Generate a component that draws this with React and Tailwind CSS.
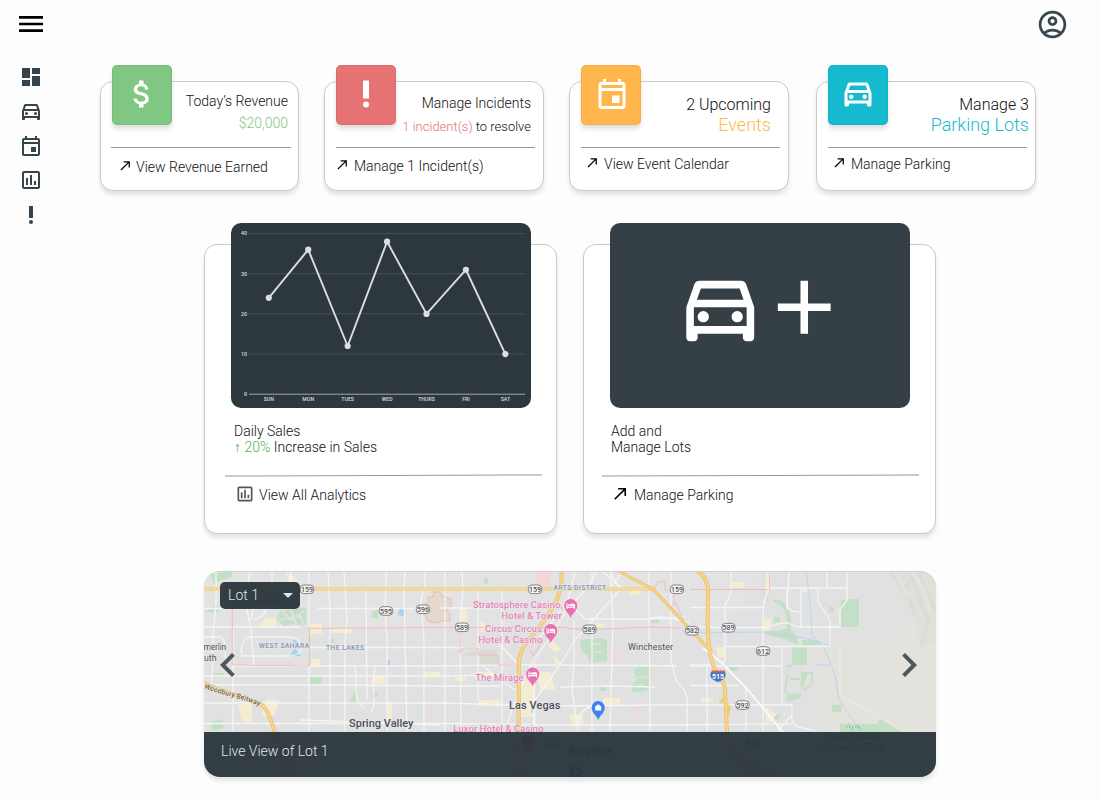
import React from "react";

const PATHS = {
  menu: "M3 18h18v-2H3v2zm0-5h18v-2H3v2zm0-7v2h18V6H3z",
  dashboard: "M3 13h8V3H3v10zm0 8h8v-6H3v6zm10 0h8V11h-8v10zm0-18v6h8V3h-8z",
  car: "M18.92 6.01C18.72 5.42 18.16 5 17.5 5h-11c-.66 0-1.21.42-1.42 1.01L3 12v8c0 .55.45 1 1 1h1c.55 0 1-.45 1-1v-1h12v1c0 .55.45 1 1 1h1c.55 0 1-.45 1-1v-8l-2.08-5.99zM6.85 7h10.29l1.04 3H5.81l1.04-3zM19 17H5v-5h14v5zM7.5 13a1.5 1.5 0 1 1 0 3a1.5 1.5 0 1 1 0-3zM16.5 13a1.5 1.5 0 1 1 0 3a1.5 1.5 0 1 1 0-3z",
  event: "M19 4h-1V2h-2v2H8V2H6v2H5c-1.11 0-1.99.9-1.99 2L3 20c0 1.1.89 2 2 2h14c1.1 0 2-.9 2-2V6c0-1.1-.9-2-2-2zm0 16H5V10h14v10zm0-12H5V6h14v2zm-7 5h5v5h-5z",
  chart: "M19 3H5c-1.1 0-2 .9-2 2v14c0 1.1.9 2 2 2h14c1.1 0 2-.9 2-2V5c0-1.1-.9-2-2-2zm0 16H5V5h14v14zM7 10h2v7H7zM11 7h2v10h-2zM15 13h2v4h-2z",
  alert: "M10 3h4v12h-4zM12 17a2 2 0 1 1 0 4a2 2 0 1 1 0-4z",
  money: "M11.8 10.9c-2.27-.59-3-1.2-3-2.15 0-1.09 1.01-1.85 2.7-1.85 1.78 0 2.44.85 2.5 2.1h2.21c-.07-1.72-1.12-3.3-3.21-3.81V3h-3v2.16c-1.94.42-3.5 1.68-3.5 3.61 0 2.31 1.91 3.46 4.7 4.13 2.5.6 3 1.48 3 2.41 0 .69-.49 1.79-2.7 1.79-2.06 0-2.87-.92-2.98-2.1h-2.2c.12 2.19 1.76 3.42 3.68 3.83V21h3v-2.15c1.95-.37 3.5-1.5 3.5-3.55 0-2.84-2.43-3.81-4.7-4.4z",
  arrow: "M9 5v2h6.59L4 18.59 5.41 20 17 8.41V15h2V5z",
  plus: "M19 13h-6v6h-2v-6H5v-2h6V5h2v6h6v2z",
  account: "M12 2C6.48 2 2 6.48 2 12s4.48 10 10 10 10-4.48 10-10S17.52 2 12 2zM7.35 18.5C8.66 17.56 10.26 17 12 17s3.34.56 4.65 1.5C15.34 19.44 13.74 20 12 20s-3.34-.56-4.65-1.5zm10.79-1.38C16.45 15.8 14.32 15 12 15s-4.45.8-6.14 2.12C4.7 15.73 4 13.95 4 12c0-4.42 3.58-8 8-8s8 3.58 8 8c0 1.95-.7 3.73-1.86 5.12zM12 6c-1.93 0-3.5 1.57-3.5 3.5S10.07 13 12 13s3.5-1.57 3.5-3.5S13.93 6 12 6zm0 5c-.83 0-1.5-.67-1.5-1.5S11.17 8 12 8s1.5.67 1.5 1.5S12.83 11 12 11z",
  left: "M15.41 7.41L14 6l-6 6 6 6 1.41-1.41L10.83 12z",
  right: "M10 6L8.59 7.41 13.17 12l-4.58 4.59L10 18l6-6z",
  caret: "M7 10l5 5 5-5z",
};

function Icon({ name, className }) {
  return (
    <svg viewBox="0 0 24 24" className={`block shrink-0 ${className}`} fill="currentColor" fillRule="evenodd">
      <path d={PATHS[name]} />
    </svg>
  );
}

const CARD = "border border-[#c9cacb] bg-white shadow-[0_4px_4px_rgba(0,0,0,0.1)]";

function StatCard({ className, tile, icon, iconClass, textClass, children, action, arrowClass, lineClass, actionClass }) {
  return (
    <div className={`h-[110px] rounded-[13px] ${CARD} ${className}`}>
      <div className="flex h-[65px]">
        <div className={`-mt-[17px] ml-[11px] h-[60px] w-[60px] shrink-0 rounded-[5px] border border-black/5 shadow-[0_4px_4px_rgba(0,0,0,0.12)] ${tile}`}>
          <Icon name={icon} className={`h-9 w-9 text-white ${iconClass}`} />
        </div>
        <div className={`ml-auto text-right whitespace-nowrap ${textClass}`}>{children}</div>
      </div>
      <div className={`h-px bg-[#979899] ${lineClass}`} />
      <div className={`flex ${actionClass}`}>
        <Icon name="arrow" className={`h-[15px] w-[15px] text-black ${arrowClass}`} />
        <span className="whitespace-nowrap text-[14px] leading-[18px]">{action}</span>
      </div>
    </div>
  );
}

const SALES = [
  ["SUN", 24], ["MON", 36], ["TUES", 12], ["WED", 38], ["THURS", 20], ["FRI", 31], ["SAT", 10],
];
const px = (i) => 37.8 + i * 39.43;
const py = (v) => 171 - v * 4.015;

function SalesChart() {
  return (
    <svg viewBox="0 0 300 185" className="block h-full w-full">
      {[0, 10, 20, 30, 40].map((v) => (
        <g key={v}>
          <line x1="18" x2="294" y1={py(v) + 0.2} y2={py(v) + 0.2} stroke={v ? "#465157" : "#a0a7aa"} strokeWidth="1" />
          <text x="16" y={py(v) + 2} textAnchor="end" fontSize="5.300" fontWeight="500" fill="#d8dadb">{v}</text>
        </g>
      ))}
      <polyline points={SALES.map(([, v], i) => `${px(i)},${py(v) + 0.2}`).join(" ")} fill="none" stroke="#dedede" strokeWidth="1.9" />
      {SALES.map(([d, v], i) => (
        <g key={d}>
          <circle cx={px(i)} cy={py(v) + 0.2} r="3.1" fill="#dedede" />
          <text x={px(i)} y="178" textAnchor="middle" fontSize="5.200" fontWeight="500" fill="#d8dadb">{d}</text>
        </g>
      ))}
    </svg>
  );
}

const MINOR_ROADS = [
  // east-west
  "M204 608.500H266M318 608.500H420", "M204 627H300", "M309 647.500H480", "M232 666H440L519 665L648 665.500L676 666",
  "M204 676H440L500 675", "M211 685H340L440 686H500", "M204 703H440L519 705L560 706L660 705L792 705",
  "M204 723.500H440L560 725H650L792 724", "M272 588V572M300 720L440 725", "M440 608H500M560 608H574L585 619H650L686 617",
  "M560 687L610 686L655 687", "M690 607.500H763", "M690 627H708L715 627.500H765C775 627 780 621 788 623L797 627H840",
  "M725 646.500H830V620L818 602V588", "M690 666H782", "M690 685.500H739", "M690 665H712", "M765 588H847",
  "M690 622L660 617L650 618",
  // north-south
  "M216 572V600C216 620 210 640 213 660L211 690", "M250 572L245 600L251 630L254 666",
  "M232 589L233 598M233 628V731", "M254 620C270 615 262 605 278 605L291 590V572", "M291 572L288 590",
  "M309 572V627M309 666V731", "M328 572L330 610L330 724", "M344 572L347 620L345 640V731", "M366 588L367 700",
  "M386 572L385 610L387 640V731", "M405 572L404 592L407 731", "M425 572V586L421 600L424 640V731",
  "M445 572V731", "M462 572L463 590L460 620L461 731", "M478 588V700", "M502 590V731",
  "M535 663L535 672L533 731", "M574 620V660L572 690L578 731", "M592 572V588M592 615V731", "M611 572V588L613 620L610 731",
  "M649 572V600L650 731", "M671 572V660L676 680C683 690 688 690 687 705V731", "M708 663C704 680 709 690 707 731",
  "M731 572V592L725 606V660L722 665", "M770 572L769 588C764 600 763 600 763 627V731", "M782 647V703",
  "M789 572L787 605C789 610 792 612 801 612", "M801 588V627", "M827 572V588", "M847 572V600L840 610V627",
  "M787 588V610", "M746 685V731", "M792 705V720C793 727 800 727 815 731",
  "M778 731L790 717H792",
  // curved loops and diagonals
  "M242 656C240 650 242 638 250 637H285C297 637 301 642 301 648C300 654 296 656 288 656H248Z",
  "M255 600L251 620", "M204 637H218C228 636 224 654 226 660", "M355 666C358 690 352 700 364 708", "M375 667C370 690 378 700 371 712",
  "M610 571L620 590L575 640L560 665L542 690L535 700V731", "M598 571L585 590L565 612L548 640L532 663L519 690L505 731",
  "M575 571L568 600L552 622L530 650", "M500 645L519 665", "M482 665L500 680L519 692", "M602 571L622 588M622 571L611 588",
  "M578 723C580 708 590 706 600 705",
];

const MAJOR_ROADS = ["M703 648L722 663L748 690L782 731L825 777"];

const PARKS = [
  "M280 611L306 607V626L294 624L284 626L276 620Z", "M210 574L232 571V577L222 580L214 584Z", "M310 677H322V685H310Z",
  "M349 702L357 686V704H349Z", "M211 722L222 719L224 728L212 731Z", "M372 612L378 609V618H371Z", "M214 673H224V677H214Z",
  "M580 640L598 638L607 640V661L590 663L587 655L581 650Z", "M633 670L640 667H649V690L640 692L632 692V684L637 680Z",
  "M841 600L847 599H859V627H841Z", "M764 631L775 631L790 628L798 638V645L785 639L765 634Z", "M773 599C790 599 793 618 790 632L787 631C788 618 785 604 773 602Z",
  "M792 647H807V665H792Z", "M801 665V698L787 702V695L800 693L804 685L808 673H802Z", "M785 668L792 667V665H788Z",
  "M802 640H818L820 645H802Z", "M832 705H842V712H832Z", "M840 724H877L880 719L900 731L925 745L936 752V777H850L840 745Z",
  "M729 667H738V671H729Z", "M774 617H780V622H774Z", "M829 607H834V612H829Z", "M484 578H488V584H484Z", "M651 618H659V623H651Z",
  "M600 686H606V691H600Z", "M330 639H334V643H330Z", "M372 692H378V697H372Z", "M749 690L755 694L751 695Z", "M773 718L780 714L778 720Z",
  "M325 747L375 748L384 762L340 760Z", "M204 612H219L217 604Z",
];

const COMMERCE = [
  "M265 618H276V628H260V624Z", "M286 572L296 578L300 584L288 582Z", "M310 624H322V634H310Z", "M332 628H352V633H332Z", "M311 659H320V666H311Z",
  "M372 676H385V684H372Z", "M238 704H252V722H242Z", "M266 700H279L274 716H262Z", "M425 672H440V677H425Z", "M388 702H392V720H388Z",
  "M460 608H467V622H460Z", "M521 680H535V717H521Z", "M537 672H550L555 690H540Z", "M475 672H493V680H475Z", "M478 700H500V706H478Z",
  "M552 640L562 650L556 652L548 646Z", "M553 655L563 664H555Z", "M570 714H583V726H572Z", "M630 590H640V595H630Z", "M731 582H744V588H731Z",
  "M764 619H771V630H763Z", "M767 571H770V588H765Z", "M716 647H725V658H718Z", "M701 698H713V702H701Z", "M766 706L776 714L772 722H766Z",
  "M603 698H620V706H603Z", "M455 677H467V681H455Z", "M480 620L492 627V632H480Z", "M596 623H604V628H596Z", "M803 588H807V592H803Z",
];

const SHIELDS = [
  [307, 589.300, "159"], [386, 611, "595"], [423, 609.300, "596"], [462, 627.300, "589"], [535, 589.300, "159"], [589.500, 629.300, "589"],
  [677, 589.300, "159"], [692, 630.700, "582"], [728.500, 627.700, "589"], [763, 651, "612"], [742.500, 705, "592"],
  [552, 742, "593"], [753, 744, "593"],
];

function Pin({ x, y, color, children }) {
  return (
    <g transform={`translate(${x} ${y})`}>
      <path d="M0 12C-1.200 8-6.600 4.800-6.600-.4A6.600 6.600 0 0 1 6.600-.4C6.600 4.800 1.200 8 0 12Z" fill={color} />
      {children}
    </g>
  );
}

function Bed() {
  return (
    <g>
      <path d="M-4.300-3H-3.300V.4H3.300V-.6H4.300V3H3.300V1.800H-3.300V3H-4.300Z" fill="#fff" />
      <path d="M-.6-2.300H3A1.300 1.300 0 0 1 4.300-1V0H-.6Z" fill="#fff" />
      <circle cx="-2" cy="-1" r="1" fill="#fff" />
    </g>
  );
}

function CityMap() {
  const halo = { paintOrder: "stroke", stroke: "#e6e6e6", strokeWidth: 1.6, strokeLinejoin: "round" };
  const places = [
    ["Stratosphere Casino,", 562.500, 607.500, 89.5], ["Hotel & Tower", 562, 618.500, 60.5], ["Circus Circus", 542, 632.300, 57],
    ["Hotel & Casino", 542.500, 643.300, 64], ["The Mirage", 523.500, 681.300, 48], ["Luxor Hotel & Casino", 543.500, 732.300, 90],
  ];
  return (
    <svg viewBox="204 571 732 206" className="block h-[206px] w-[732px]" fontWeight="400">
      <rect x="204" y="571" width="732" height="206" fill="#e1e1e1" />
      <path d="M204 571H765L725 627H204Z" fill="#e5e5e5" opacity="0.5" />
      <path d="M820 652L850 640L900 635L936 600V777H840L815 700Z" fill="#e3e2dd" />
      <path d="M888 571H936V640L920 648L916 620L905 600Z" fill="#e0dfda" />
      <path d="M890 571L905 590L912 575L920 600L928 620L922 645M905 585L915 615M918 572L930 600L936 610" stroke="#d6d5ce" strokeWidth="3" fill="none" opacity="0.5" />
      <path d="M912 571L925 592L931 612M897 577L910 598" stroke="#e8e6e0" strokeWidth="3" fill="none" opacity="0.7" />
      <path d="M840 647V695L895 726" stroke="#edece8" fill="none" />
      {PARKS.map((d) => <path key={d} d={d} fill="#c3e0c6" />)}
      {COMMERCE.map((d) => <path key={d} d={d} fill="#f4ecd3" />)}
      <path d="M461 656H480V664L497 665V650H478Z" fill="#dcd8d3" />
      <path d="M424 605L428 602V597H433L434 592H440L442 596L451 599V606L446 610L450 614V621H441L438 623L428 621L424 612Z" fill="#e3d9cf" stroke="#efaea8" strokeWidth="0.800" />
      <path d="M537 571H550V588H535ZM611 650H616V665H611ZM634 707H639V714H634ZM428 709H433V714H428Z" fill="#f2d7d6" />
      <path d="M399 609H404V617L398 615ZM387 660H390V665H387ZM292 638L300 641L296 650L301 656H289L295 648Z" fill="#a9d3f5" />
      <path d="M806 571L810 600L812 635L825 650L835 675L839 700L860 731M700 633L760 632L800 637L830 645M817 665H830M763 593L768 601" stroke="#b5d5ef" fill="none" strokeWidth="1" />
      <circle cx="533" cy="711" r="2" fill="#a9d3f5" />
      <path d="M282 611L291 620L304 611M278 620L300 616L305 626M290 607L297 626" stroke="#e1e1e1" strokeWidth="2" fill="none" />
      <path d="M583 645L594 641L603 645L593 650L604 654L592 659M638 690V675L645 671V687M790 679H800M803 673H812V683L804 691M788 675L785 690L790 698" stroke="#c3e0c6" strokeWidth="2" fill="none" />
      <path d="M590 644H601M594 652H602M637 677H647M639 685H646" stroke="#e1e1e1" strokeWidth="1.500" fill="none" />
      {MINOR_ROADS.map((d) => <path key={d} d={d} stroke="#f5f5f5" strokeWidth="1.300" fill="none" strokeLinejoin="round" />)}
      {MAJOR_ROADS.map((d) => <path key={d} d={d} stroke="#f9f9f9" strokeWidth="2" fill="none" />)}
      <path d="M232.300 598V665L309.500 666V628.500L440 627.500H563L574 629H604L650 627L680 628M690 589.500H769.500V571M655 589L657 582H665V590L674 592V604M674 611L671 607L676 603L684 622M460 627V653L463 648H478V655H498V665H517M536 641L530 650L533 656L542 642" stroke="#f0b9b4" strokeWidth="0.900" fill="none" />
      <path d="M204 589H655" stroke="#efc76a" strokeWidth="2.800" fill="none" />
      <path d="M204 589H655" stroke="#fbe09a" strokeWidth="1.600" fill="none" />
      <g fill="none" strokeLinejoin="round">
        {[["#e6bd62", 3.8], ["#f8d587", 2.4]].map(([c, w]) => (
          <g key={c} stroke={c}>
            <path strokeWidth={w} d="M561.500 571V582C560 597 553 608 543 622C533 636 527 640 522 650C518 658 519 664 518.700 675V777" />
            <path strokeWidth={w} d="M697 571C704 575 707 580 708 588L707.500 625C709 645 709 655 714 667C718 677 725 680 725 690L727 732C728 750 740 765 773 777" />
            <path strokeWidth={w} d="M204 683C220 692 240 695 257 702C268 706 272 722 276 738C279 748 287 750 287.500 765V777" />
            <path strokeWidth={w - 0.8} d="M618 571L653 589L688 627L712 652" />
          </g>
        ))}
      </g>
      <path d="M720 703L725 697M729 705V710L727 717" stroke="#efcb72" strokeWidth="2.500" fill="none" />
      <path d="M440 741H936M204 745H440M300 760H700" stroke="#f7f7f7" strokeWidth="1.300" />
      <path d="M846 727H860M848 723L853 731M857 725L862 731" stroke="#75b67e" strokeDasharray="1.500 1.500" />
      {SHIELDS.map(([x, y, t]) => (
        <g key={`${t}-${x}`}>
          <rect x={x - 6.7} y={y - 4.3} width="13.400" height="8.600" rx="3.600" fill="#f6f6f6" stroke="#777" strokeWidth="0.900" />
          <text x={x} y={y + 2.5} textAnchor="middle" fontSize="7" fontWeight="500" fill="#4e5356">{t}</text>
        </g>
      ))}
      <path d="M711 672H725C727 677 724 680 718 682C712 680 709 677 711 672Z" fill="#3f78c5" />
      <path d="M711.500 670.500H725V672.500H711.500Z" fill="#d95e63" />
      <text x="718" y="678.800" textAnchor="middle" fontSize="7" fontWeight="700" fill="#fff">515</text>
      <g fill="#8093b2" fontSize="6.600" fontWeight="500" style={halo}>
        <text x="259" y="647.700" textLength="50">WEST SAHARA</text>
        <text x="326" y="650" textLength="38">THE LAKES</text>
        <text x="553.500" y="589.700" textLength="52.500">ARTS DISTRICT</text>
        <text x="233" y="603" textLength="56">PECCOLE RANCH</text>
      </g>
      <g fill="#4a5157" style={halo}>
        <text x="203.500" y="650" fontSize="8.800" textLength="22.500">merlin</text>
        <text x="204" y="660.500" fontSize="8.800" textLength="12.500">uth</text>
        <text x="349" y="727" fontSize="11" fontWeight="500" textLength="64.500">Spring Valley</text>
        <text x="509" y="709" fontSize="11" fontWeight="500" textLength="51.500">Las Vegas</text>
        <text x="628" y="649.500" fontSize="9" textLength="45">Winchester</text>
        <text x="569" y="755" fontSize="11" fontWeight="500" textLength="43">Paradise</text>
      </g>
      <path id="beltway" d="M204 688C220 695 238 697 257 705L270 711" fill="none" />
      <text fontSize="7" fontWeight="500" fill="#7b5a26" style={halo}><textPath href="#beltway">Woodbury Beltway</textPath></text>
      <g fill="#ec6fb2" fontSize="9.400" style={halo}>
        {places.map(([t, x, y, w]) => <text key={t} x={x - w} y={y} textLength={w}>{t}</text>)}
      </g>
      <g fill="#5f9b67" fontSize="9.300">
        <text x="826" y="739" textLength="54">Clark County</text>
        <text x="822" y="750" textLength="62">Wetlands Park</text>
      </g>
      <Pin x={570.7} y={606} color="#ec6fb2"><Bed /></Pin>
      <Pin x={550.7} y={631} color="#ec6fb2"><Bed /></Pin>
      <Pin x={532.7} y={674.500} color="#ec6fb2"><Bed /></Pin>
      <Pin x={528.3} y={742.500} color="#ec6fb2"><path d="M-3 3L3-3M0 3L3 0" stroke="#fff" /></Pin>
      <Pin x={598.2} y={708} color="#3f83f0"><path d="M-3-2H-1.500V-3.300H1.500V-2H3V2.500H-3Z" fill="#fff" /></Pin>
      <circle cx="575.500" cy="772.500" r="6.500" fill="#27a5d9" />
      <path d="M575.500 768V777M571.500 773L575.500 771L579.500 773" stroke="#fff" strokeWidth="1.300" fill="none" />
    </svg>
  );
}

export default function App() {
  return (
    <div className="flex h-[800px] w-[1100px] flex-col overflow-hidden bg-[#fdfdfd] font-['Roboto',sans-serif] font-light text-[#111]">
      <header className="flex h-[65px] shrink-0 items-start justify-between pt-2 pr-8 pl-[15px]">
        <Icon name="menu" className="h-8 w-8 text-black" />
        <Icon name="account" className="mr-[-0.500px] h-[33px] w-[33px] text-[#37474f]" />
      </header>
      <div className="flex flex-1">
        <nav className="flex w-[100px] shrink-0 flex-col pl-[19px] text-[#37434a]">
          <Icon name="dashboard" className="h-6 w-6" />
          <Icon name="car" className="mt-[10px] h-6 w-6" />
          <Icon name="event" className="mt-[11px] h-6 w-6" />
          <Icon name="chart" className="mt-[10px] h-6 w-6" />
          <Icon name="alert" className="mt-[11px] h-6 w-6" />
        </nav>
        <main className="flex flex-col">
          <section className="flex pt-4">
            <StatCard className="w-[199px]" tile="bg-[#81c784]" icon="money" iconClass="mt-[10px] ml-[11px]" textClass="pt-[8px] pr-[10px] text-[14px] leading-[22px]" action="View Revenue Earned" lineClass="ml-[10px] w-[180px]" actionClass="ml-[17px] pt-[10px]" arrowClass="mr-[3px]">
              <div>Today’s Revenue</div>
              <div className="text-[#81c784]">$20,000</div>
            </StatCard>
            <StatCard className="ml-[25px] w-[220px]" tile="bg-[#e57373]" icon="alert" iconClass="mt-[10px] ml-[11px]" textClass="pt-[10px] pr-[12px] text-[14px] leading-[22px]" action="Manage 1 Incident(s)" lineClass="ml-[11px] w-[199px]" actionClass="ml-[10px] pt-[9px]" arrowClass="mr-[4px]">
              <div>Manage Incidents</div>
              <div className="pt-[2px] text-[13px]"><span className="text-[#e57373]">1 incident(s)</span> to resolve</div>
            </StatCard>
            <StatCard className="ml-[25px] w-[220px]" tile="bg-[#ffb74d]" icon="event" iconClass="mt-[10px] ml-[11.500px]" textClass="pt-[13px] pr-[17px] text-[16px] leading-[20px]" action="View Event Calendar" lineClass="ml-[11px] w-[199px]" actionClass="ml-[15px] pt-[7px]" arrowClass="mr-[4px]">
              <div>2 Upcoming</div>
              <div className="text-[18px] text-[#ffb74d]">Events</div>
            </StatCard>
            <StatCard className="ml-[27px] w-[220px]" tile="bg-[#16bace]" icon="car" iconClass="mt-[9px] ml-[10.500px]" textClass="pt-[13px] pr-[6px] text-[16px] leading-[20px]" action="Manage Parking" lineClass="ml-[11px] w-[199px]" actionClass="ml-[15px] pt-[7px]" arrowClass="mr-[4px]">
              <div>Manage 3</div>
              <div className="text-[18px] text-[#16bace]">Parking Lots</div>
            </StatCard>
          </section>

          <section className="ml-[104px] flex gap-[26px] pt-[53px] text-[14px]">
            <div className={`h-[290px] w-[353px] rounded-[13px] ${CARD}`}>
              <div className="-mt-[22px] ml-[26px] h-[185px] w-[300px] overflow-hidden rounded-[10px] bg-[#2d383e]">
                <SalesChart />
              </div>
              <div className="ml-[29px] pt-[15px] leading-4">
                <div>Daily Sales</div>
                <div><span className="text-[#4caf50]">↑ 20%</span> Increase in Sales</div>
              </div>
              <div className="mt-[20px] ml-[20px] h-px w-[317px] rotate-[-0.18deg] bg-[#979899]" />
              <div className="flex pt-[8px] pl-[30px]">
                <Icon name="chart" className="h-5 w-5 text-[#555]" />
                <span className="ml-[4px] pt-[2px] leading-[18px]">View All Analytics</span>
              </div>
            </div>
            <div className={`h-[290px] w-[353px] rounded-[13px] ${CARD}`}>
              <div className="-mt-[22px] ml-[26px] flex h-[185px] w-[300px] rounded-[10px] bg-[#263238]/93 pt-[38.500px] pl-[64.500px] text-white">
                <Icon name="car" className="h-[90.500px] w-[90.500px]" />
                <Icon name="plus" className="-ml-[6.500px] h-[90.500px] w-[90.500px]" />
              </div>
              <div className="ml-[27px] pt-[15px] leading-4">
                <div>Add and</div>
                <div>Manage Lots</div>
              </div>
              <div className="mt-[20px] ml-[18px] h-px w-[317px] rotate-[-0.18deg] bg-[#979899]" />
              <div className="flex pt-[8px] pl-[27px]">
                <Icon name="arrow" className="h-[19px] w-[19px] text-black" />
                <span className="ml-[4px] pt-[2px] leading-[18px]">Manage Parking</span>
              </div>
            </div>
          </section>

          <section className="relative mt-[37px] ml-[104px] h-[206px] w-[732px] overflow-hidden rounded-[16px] shadow-[0_4px_4px_rgba(0,0,0,0.1)]">
            <CityMap />
            <div className="absolute inset-0 rounded-[16px] border-t border-[#cfcfcf]" />
            <div className="absolute inset-x-0 bottom-0 flex h-[45px] items-center bg-[#263238]/93 px-[17px] pb-[7px] text-[14px] text-[#e3e5e6]">Live View of Lot 1</div>
            <button className="absolute top-[11px] left-4 flex h-[27px] w-20 items-center justify-between rounded-[5px] bg-[#263238]/93 pl-2 text-[14px] text-[#e3e5e6]">
              Lot 1
              <Icon name="caret" className="mb-[2px] h-6 w-6" />
            </button>
            <Icon name="left" className="absolute top-[70px] left-0 h-12 w-12 text-[#4d575c]" />
            <Icon name="right" className="absolute top-[70px] left-[681px] h-12 w-12 text-[#4d575c]" />
          </section>
        </main>
      </div>
    </div>
  );
}
